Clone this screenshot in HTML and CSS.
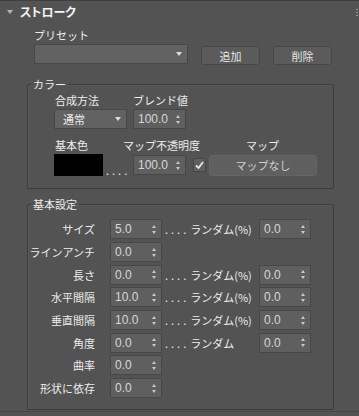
FILE: index.html
```html
<!DOCTYPE html>
<html>
<head>
  <meta charset="utf-8">
  <title>ストローク</title>
  <link rel="stylesheet" href="styles.css">
</head>
<body>
  <div class="panel">
    <div class="head">
      <span class="tri"></span>
      <span class="title">ストローク</span>
      <span class="grip"></span>
    </div>

    <div class="preset">
      <div class="lbl">プリセット</div>
      <div class="preset-row">
        <div class="drop wide"><span></span><i class="darr"></i></div>
        <button class="btn">追加</button>
        <button class="btn">削除</button>
      </div>
    </div>

    <fieldset class="group color">
      <legend>カラー</legend>
      <div class="inner">
        <div class="lbl-row">
          <span class="l-blend">合成方法</span>
          <span>ブレンド値</span>
        </div>
        <div class="ctl-row">
          <div class="drop mode"><span>通常</span><i class="darr"></i></div>
          <div class="spin s53"><span>100.0</span><i class="arr"></i></div>
        </div>
        <div class="lbl-row second">
          <span class="l-base">基本色</span>
          <span class="l-opac">マップ不透明度</span>
          <span class="l-map">マップ</span>
        </div>
        <div class="ctl-row">
          <div class="swatch"></div>
          <span class="dots">....</span>
          <div class="spin s53"><span>100.0</span><i class="arr"></i></div>
          <div class="check">
            <svg width="9" height="8" viewBox="0 0 9 8"><path d="M1 4.5 L3.5 7 L8 1" fill="none" stroke="#e6e6e6" stroke-width="1.8"/></svg>
          </div>
          <button class="btn map">マップなし</button>
        </div>
      </div>
    </fieldset>

    <fieldset class="group basic">
      <legend>基本設定</legend>
      <div class="inner rows">
        <div class="row"><span class="name">サイズ</span><div class="spin"><span>5.0</span><i class="arr"></i></div><span class="rand"><b class="dd">....</b>ランダム(%)</span><div class="spin"><span>0.0</span><i class="arr"></i></div></div>
        <div class="row"><span class="name">ラインアンチ</span><div class="spin"><span>0.0</span><i class="arr"></i></div></div>
        <div class="row"><span class="name">長さ</span><div class="spin"><span>0.0</span><i class="arr"></i></div><span class="rand"><b class="dd">....</b>ランダム(%)</span><div class="spin"><span>0.0</span><i class="arr"></i></div></div>
        <div class="row"><span class="name">水平間隔</span><div class="spin"><span>10.0</span><i class="arr"></i></div><span class="rand"><b class="dd">....</b>ランダム(%)</span><div class="spin"><span>0.0</span><i class="arr"></i></div></div>
        <div class="row"><span class="name">垂直間隔</span><div class="spin"><span>10.0</span><i class="arr"></i></div><span class="rand"><b class="dd">....</b>ランダム(%)</span><div class="spin"><span>0.0</span><i class="arr"></i></div></div>
        <div class="row"><span class="name">角度</span><div class="spin"><span>0.0</span><i class="arr"></i></div><span class="rand"><b class="dd">....</b>ランダム</span><div class="spin"><span>0.0</span><i class="arr"></i></div></div>
        <div class="row"><span class="name">曲率</span><div class="spin"><span>0.0</span><i class="arr"></i></div></div>
        <div class="row"><span class="name">形状に依存</span><div class="spin"><span>0.0</span><i class="arr"></i></div></div>
      </div>
    </fieldset>
  </div>
</body>
</html>
```

FILE: styles.css
```css
body { margin: 0; background: #535353; color: #ececec; font: 11px/14px "Noto Sans CJK JP", sans-serif; width: 359px; height: 416px; overflow: hidden; }
.panel { border-top: 1px solid #3f3f3f; height: 410px; border-bottom: 1px solid #474747; }

.head { display: flex; align-items: center; height: 22px; padding-left: 7px; }
.tri { width: 0; height: 0; border-left: 3px solid transparent; border-right: 3px solid transparent; border-top: 4px solid #b5b5b5; margin-right: 7px; }
.title { font-weight: bold; font-size: 12px; font-feature-settings: "palt"; color: #f4f4f4; }
.grip { margin-left: auto; margin-right: 1px; width: 2px; height: 7px; background: repeating-linear-gradient(#9a9a9a 0 1px, transparent 1px 3px); }

.preset { padding: 5px 0 0 34px; }
.preset-row { display: flex; align-items: flex-start; margin-top: 2px; }
.lbl { height: 14px; }

.drop { box-sizing: border-box; height: 20px; background: #626262; border: 1px solid #474747; display: flex; align-items: center; justify-content: space-between; padding: 0 5px 0 8px; }
.drop.wide { width: 154px; }
.drop.mode { width: 73px; }
.darr { width: 0; height: 0; border-left: 3px solid transparent; border-right: 3px solid transparent; border-top: 4px solid #dcdcdc; }

.btn { box-sizing: border-box; height: 19px; width: 59px; margin: 2px 0 0 13px; padding: 0; background: #5b5b5b; border: 1px solid #474747; border-radius: 3px; color: #e4e4e4; font: 11px/14px "Noto Sans CJK JP", sans-serif; }

.group { margin: 12px 25px 0 27px; padding: 0; border: 1px solid #3c3c3c; border-radius: 2px; box-shadow: inset 1px 1px 0 #5b5b5b; min-width: 0; }
.group legend { margin-left: 3px; padding: 0 2px; line-height: 14px; }
.group.basic { margin-top: 8px; }

.color .inner { padding: 2px 0 12px 26px; }
.lbl-row { display: flex; height: 14px; }
.lbl-row .l-blend { width: 78px; padding-left: 1px; }
.lbl-row.second { margin-top: 9px; }
.l-base { width: 68px; padding-left: 1px; }
.l-opac { width: 123px; }
.ctl-row { display: flex; align-items: center; margin-top: 2px; }
.ctl-row .drop.mode { margin-right: 6px; }
.swatch { width: 49px; height: 22px; background: #000; }
.dots { width: 30px; padding-left: 3px; box-sizing: border-box; letter-spacing: 3px; align-self: flex-end; line-height: 12px; }
.check { box-sizing: border-box; width: 13px; height: 14px; margin-left: 7px; background: #5f5f5f; border: 1px solid #474747; display: flex; align-items: center; justify-content: center; }
.btn.map { width: 108px; height: 21px; margin: 0 0 0 3px; background: #5f5f5f; border-color: #656565; color: #d0d0d0; }

.spin { box-sizing: border-box; width: 52px; height: 20px; background: #5f5f5f; border: 1px solid #474747; display: flex; align-items: center; justify-content: space-between; padding: 0 4px 0 4px; font-family: "Liberation Sans", sans-serif; font-size: 12px; color: #d6d6dc; }
.spin.s53 { width: 53px; }
.arr { position: relative; width: 5px; height: 9px; }
.arr::before, .arr::after { content: ""; position: absolute; left: 0; border-left: 2.5px solid transparent; border-right: 2.5px solid transparent; }
.arr::before { top: 0; border-bottom: 3px solid #c8c8c8; }
.arr::after { bottom: 0; border-top: 3px solid #c8c8c8; }

.rows { padding: 7px 0 9px 0; }
.row { display: flex; align-items: center; height: 22.7px; }
.row .name { width: 67px; text-align: right; margin-right: 15px; }
.rand { width: 97px; padding-left: 3px; box-sizing: border-box; white-space: nowrap; }
.dd { font-weight: normal; letter-spacing: 3px; margin-right: 1px; }
```
